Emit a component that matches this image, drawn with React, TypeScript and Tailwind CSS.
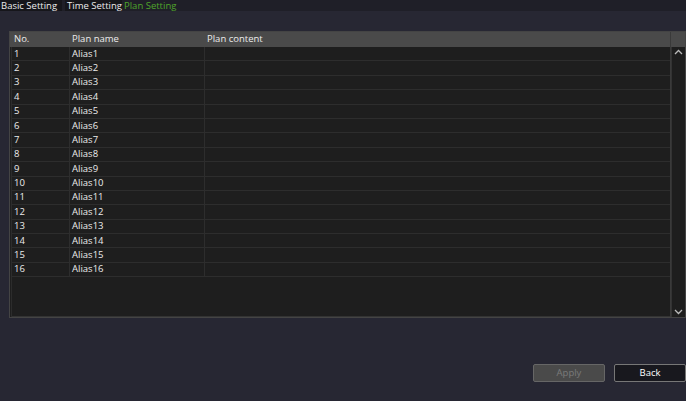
import React from "react";

const rows = Array.from({ length: 16 }, (_, i) => i + 1);

export default function App() {
  return (
    <div
      className="w-[686px] h-[401px] bg-[#272733] flex flex-col text-[9.5px] text-[#ececec] overflow-hidden"
      style={{ fontFamily: '"Open Sans", "Liberation Sans", sans-serif' }}
    >
      <div className="h-[11px] bg-[#1f1f28] flex items-stretch">
        <div className="w-[62px] bg-[#16161b] flex items-center leading-none pl-[1px]">Basic Setting</div>
        <div className="w-[3px]" />
        <div className="w-[57px] bg-[#16161b] flex items-center leading-none pl-[2px]">Time Setting</div>
        <div className="w-[56px] flex items-center leading-none pl-[2px] text-[#4fa52a]">Plan Setting</div>
      </div>
      <div className="mt-[20px] ml-[9px] w-[677px] h-[287px] border border-[#444] bg-[#1e1e1e] flex">
        <div className="flex-1 flex flex-col">
          <div className="h-[15px] bg-[#4a4a4a] flex items-center">
            <div className="w-[58px] pl-[4px]">No.</div>
            <div className="w-[135px] pl-[4px]">Plan name</div>
            <div className="flex-1 pl-[4px]">Plan content</div>
          </div>
          <div className="flex-1 flex flex-col border-l border-[#2c2c2c] ml-[1px]">
            {rows.map((n) => (
              <div key={n} className="h-[14.4px] flex items-center border-b border-[#2d2d2d]">
                <div className="w-[57px] h-full pl-[2px] flex items-center">{n}</div>
                <div className="w-[135px] h-full pl-[2px] flex items-center border-l border-[#2d2d2d]">Alias{n}</div>
                <div className="flex-1 h-full border-l border-[#2d2d2d]" />
              </div>
            ))}
            <div className="flex-1 border-b border-[#333]" />
          </div>
        </div>
        <div className="w-[15px] flex flex-col border-l border-[#3a3a3a]">
          <div className="h-[15px] bg-[#4a4a4a]" />
          <div className="flex-1 flex flex-col items-center justify-between py-[2px] border-l border-[#333]">
            <svg width="9" height="6" viewBox="0 0 9 6"><path d="M1 5 L4.5 1.5 L8 5" stroke="#bbb" strokeWidth="1.3" fill="none" /></svg>
            <svg width="9" height="6" viewBox="0 0 9 6"><path d="M1 1 L4.5 4.5 L8 1" stroke="#bbb" strokeWidth="1.3" fill="none" /></svg>
          </div>
        </div>
      </div>
      <div className="mt-[46px] flex justify-end gap-[9px]">
        <div className="w-[72px] h-[18px] rounded-[2px] bg-[#4a4a4a] border border-[#666] flex items-center justify-center text-[#7a7a7a]">Apply</div>
        <div className="w-[72px] h-[18px] rounded-[2px] bg-[#18181e] border border-[#777] flex items-center justify-center text-white">Back</div>
      </div>
    </div>
  );
}
